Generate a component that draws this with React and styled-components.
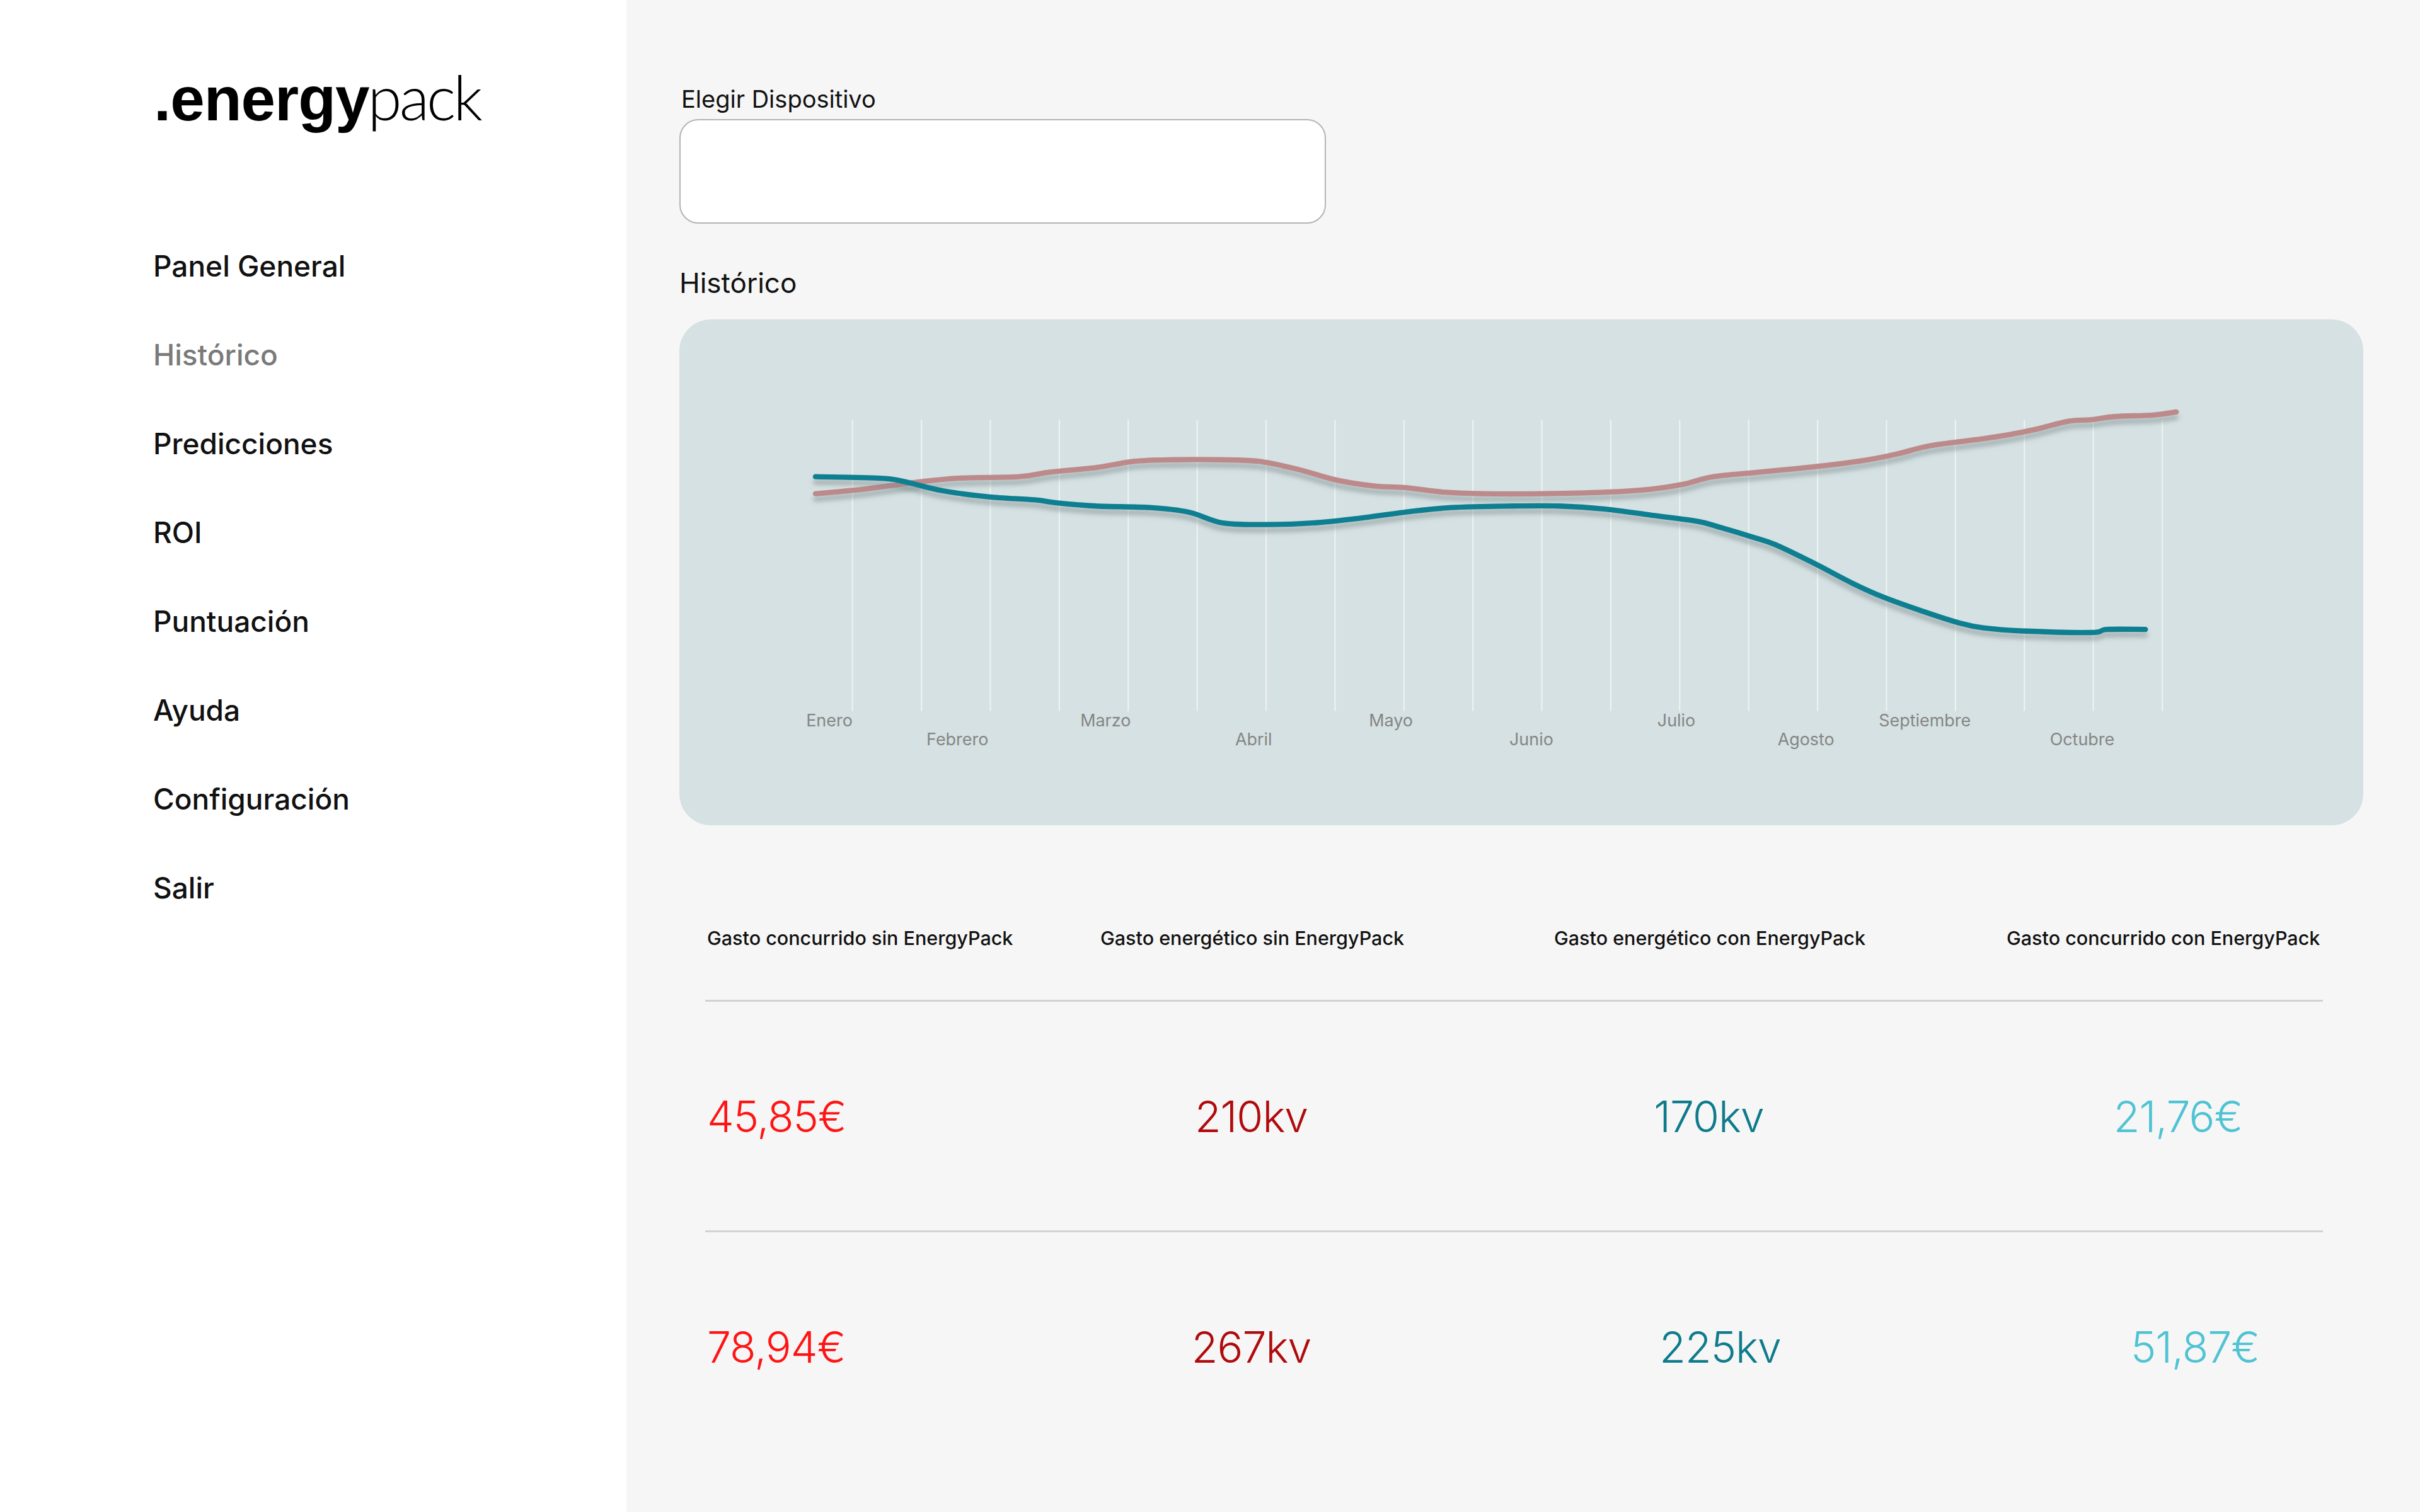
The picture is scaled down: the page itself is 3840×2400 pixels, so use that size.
import React from "react";
import styled, { createGlobalStyle } from "styled-components";

const GlobalStyle = createGlobalStyle`
  html, body {
    margin: 0;
    padding: 0;
  }
  body {
    font-family: Inter, "Noto Sans", sans-serif;
    color: #111;
  }
`

const Page = styled.div`
  display: flex;
  width: 3840px;
  height: 2400px;
  overflow: hidden;
`

const Sidebar = styled.aside`
  width: 994px;
  flex-shrink: 0;
  background: #ffffff;
  padding: 104px 0 0 244px;
  box-sizing: border-box;
`

const Logo = styled.div`
  font-family: "Liberation Sans", Arial, sans-serif;
  font-size: 98px;
  line-height: 1;
  height: 98px;
  white-space: nowrap;
  color: #000;
`
const LogoBold = styled.span`
  font-weight: 700;
  letter-spacing: -1px;
`
const LogoLight = styled.span`
  font-family: Lato, "Liberation Sans", sans-serif;
  font-weight: 300;
  letter-spacing: -4px;
  margin-left: -2px;
`

const Nav = styled.ul`
  list-style: none;
  margin: 150px 0 0 -1px;
  padding: 0;
`
const NavItem = styled.li`
  height: 141px;
  line-height: 141px;
  font-size: 46px;
  font-weight: 500;
  color: ${(p) => (p.$active ? "#7a7a7a" : "#111")};
  cursor: pointer;
`

const Main = styled.main`
  flex: 1;
  background: #f6f6f6;
  padding: 134px 90px 0 84px;
  box-sizing: border-box;
`

const FieldLabel = styled.div`
  font-size: 38px;
  line-height: 46px;
  color: #111;
  margin-bottom: 9px;
  padding-left: 3px;
`
const DeviceInput = styled.div`
  width: 1026px;
  height: 166px;
  box-sizing: border-box;
  background: #fff;
  border: 2px solid #b4b4b4;
  border-radius: 30px;
`

const SectionTitle = styled.h2`
  margin: 68px 0 31px;
  font-size: 44px;
  line-height: 53px;
  font-weight: 400;
  color: #111;
`

const ChartCard = styled.div`
  width: 2672px;
  height: 803px;
  background: #d5e1e2;
  border-radius: 50px;
  overflow: hidden;

  svg {
    display: block;
    width: 100%;
    height: 100%;
  }
  text {
    font-family: Inter, "Noto Sans", sans-serif;
    font-size: 11px;
    fill: #858585;
  }
`

const Table = styled.div`
  display: grid;
  grid-template-columns: 624px 720px 718px 505px;
  margin: 160px 0 0 41px;
  width: 2567px;
`
const HeadCell = styled.div`
  font-size: 30.5px;
  line-height: 38px;
  font-weight: 500;
  color: #111;
  padding-left: 3px;
  margin-bottom: 79px;
  white-space: nowrap;
`
const Divider = styled.div`
  grid-column: 1 / -1;
  height: 3px;
  background: #d2d2d2;
`
const ValueCell = styled.div`
  height: 363px;
  display: flex;
  align-items: center;
  justify-content: ${(p) => (p.$center ? "center" : "flex-start")};
  width: ${(p) => p.$w}px;
  padding-left: ${(p) => p.$shift}px;
  box-sizing: border-box;
  font-size: 68px;
  font-weight: 300;
  letter-spacing: -1px;
  color: ${(p) => p.$color};
`

const grid = Array.from({ length: 20 }, (_, i) => 112 + i * 44.68);

const teal = [
  [88, 102], [130, 103], [145, 105], [170, 111], [200, 115], [230, 117], [245, 119],
  [270, 121], [305, 122], [330, 125], [352, 132], [380, 133], [410, 132], [440, 129],
  [470, 125], [500, 122], [540, 121], [570, 121], [600, 123], [630, 127], [660, 131],
  [675, 135], [695, 141], [710, 146], [735, 158], [760, 171], [780, 180], [805, 189],
  [830, 197], [845, 200], [870, 202], [915, 203], [925, 201], [950, 201],
];
const rose = [
  [88, 113], [120, 110], [150, 106], [180, 103], [220, 102], [240, 99], [270, 96],
  [295, 92], [320, 91], [350, 91], [375, 92], [400, 97], [425, 104], [450, 108],
  [470, 109], [495, 112], [520, 113], [560, 113], [600, 112], [630, 110], [650, 107],
  [670, 102], [700, 99], [740, 95], [770, 91], [790, 87], [810, 82], [840, 78],
  [860, 75], [880, 71], [900, 66], [915, 65], [930, 63], [955, 62], [970, 60],
];

const months = [
  ["Enero", 97, 261], ["Febrero", 180, 273], ["Marzo", 276, 261], ["Abril", 372, 273],
  ["Mayo", 461, 261], ["Junio", 552, 273], ["Julio", 646, 261], ["Agosto", 730, 273],
  ["Septiembre", 807, 261], ["Octubre", 909, 273],
];

// catmull-rom -> cubic bezier
const smooth = (pts) => {
  let d = `M${pts[0][0]},${pts[0][1]}`;
  for (let i = 0; i < pts.length - 1; i++) {
    const p0 = pts[i - 1] || pts[i];
    const p1 = pts[i];
    const p2 = pts[i + 1];
    const p3 = pts[i + 2] || p2;
    const c1x = p1[0] + (p2[0] - p0[0]) / 6;
    const c1y = p1[1] + (p2[1] - p0[1]) / 6;
    const c2x = p2[0] - (p3[0] - p1[0]) / 6;
    const c2y = p2[1] - (p3[1] - p1[1]) / 6;
    d += ` C${c1x},${c1y} ${c2x},${c2y} ${p2[0]},${p2[1]}`;
  }
  return d;
};

const HistoryChart = () => (
  <ChartCard>
    <svg viewBox="0 0 1091 328">
      <defs>
        <filter id="lineShadow" x="-5%" y="-30%" width="110%" height="160%">
          <feDropShadow dx="0" dy="3.5" stdDeviation="1.6" floodColor="#7d8b8d" floodOpacity="0.55" />
        </filter>
      </defs>
      {grid.map((x) => (
        <line key={x} x1={x} x2={x} y1="65" y2="254" stroke="#eef2f2" strokeWidth="0.9" />
      ))}
      <path d={smooth(rose)} fill="none" stroke="#bd8a8b" strokeWidth="3.4" strokeLinecap="round" filter="url(#lineShadow)" />
      <path d={smooth(teal)} fill="none" stroke="#0b7f91" strokeWidth="3.4" strokeLinecap="round" filter="url(#lineShadow)" />
      {months.map(([m, x, y]) => (
        <text key={m} x={x} y={y} textAnchor="middle" dominantBaseline="middle">{m}</text>
      ))}
    </svg>
  </ChartCard>
);

const headers = [
  "Gasto concurrido sin EnergyPack",
  "Gasto energético sin EnergyPack",
  "Gasto energético con EnergyPack",
  "Gasto concurrido con EnergyPack",
];
const colors = ["#ff1414", "#b00a0c", "#0e7b8c", "#4fc3d3"];
const widths = [624, 485, 497, 500];
const rows = [
  [["45,85€", 0], ["210kv", 0], ["170kv", 0], ["21,76€", 25]],
  [["78,94€", 0], ["267kv", 0], ["225kv", 18], ["51,87€", 52]],
];

export default function App() {
  const nav = ["Panel General", "Histórico", "Predicciones", "ROI", "Puntuación", "Ayuda", "Configuración", "Salir"];
  return (
    <>
      <GlobalStyle />
      <Page>
        <Sidebar>
          <Logo>
            <LogoBold>.energy</LogoBold>
            <LogoLight>pack</LogoLight>
          </Logo>
          <Nav>
            {nav.map((n) => (
              <NavItem key={n} $active={n === "Histórico"}>{n}</NavItem>
            ))}
          </Nav>
        </Sidebar>
        <Main>
          <FieldLabel>Elegir Dispositivo</FieldLabel>
          <DeviceInput />
          <SectionTitle>Histórico</SectionTitle>
          <HistoryChart />
          <Table>
            {headers.map((h) => (
              <HeadCell key={h}>{h}</HeadCell>
            ))}
            {rows.map((row, r) => (
              <React.Fragment key={r}>
                <Divider />
                {row.map(([v, shift], i) => (
                  <ValueCell key={v} $color={colors[i]} $w={widths[i] + shift * 2} $center={i > 0} $shift={i > 0 ? 0 : 3}>
                    {v}
                  </ValueCell>
                ))}
              </React.Fragment>
            ))}
          </Table>
        </Main>
      </Page>
    </>
  );
}
